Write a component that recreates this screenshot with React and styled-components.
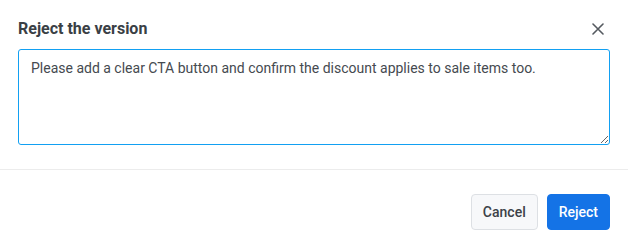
import React from "react";
import styled, { createGlobalStyle } from "styled-components";

const Global = createGlobalStyle`
  html, body { margin: 0; padding: 0; background: #fff; }
  body { font-family: Roboto, "Noto Sans", Arial, sans-serif; }
  * { box-sizing: border-box; }
`;

const Dialog = styled.div`
  width: 628px;
  height: 250px;
  background: #fff;
  display: flex;
  flex-direction: column;
`;

const Body = styled.div`
  padding: 18px 18px 24px 18px;
  display: flex;
  flex-direction: column;
  gap: 9px;
`;

const Header = styled.div`
  display: flex;
  align-items: center;
  justify-content: space-between;
  height: 22px;
`;

const Title = styled.h2`
  margin: 0;
  font-size: 16px;
  line-height: 22px;
  font-weight: 700;
  color: #3a3f45;
`;

const CloseButton = styled.button`
  border: 0;
  background: transparent;
  padding: 0;
  width: 20px;
  height: 20px;
  display: flex;
  align-items: center;
  justify-content: center;
  margin-right: 2px;
  cursor: pointer;
  color: #555a60;
`;

const TextArea = styled.textarea`
  width: 100%;
  height: 96px;
  margin: 0;
  border: 1px solid #12a0f2;
  border-radius: 3px;
  padding: 8px 12px;
  font-family: Roboto, "Noto Sans", Arial, sans-serif;
  font-size: 14px;
  line-height: 20px;
  color: #454a50;
  resize: vertical;
  outline: none;
  display: block;
`;

const Footer = styled.div`
  border-top: 1px solid #ececec;
  padding: 24px 18px 20px;
  display: flex;
  justify-content: flex-end;
  gap: 9px;
`;

const Button = styled.button`
  height: 36px;
  padding: 0 11px;
  border-radius: 4px;
  font-family: Roboto, "Noto Sans", Arial, sans-serif;
  font-size: 14px;
  font-weight: 500;
  cursor: pointer;
  border: 1px solid ${(p) => (p.$primary ? "#1473e6" : "#dde0e4")};
  background: ${(p) => (p.$primary ? "#1473e6" : "#f7f8fa")};
  color: ${(p) => (p.$primary ? "#ffffff" : "#3c4148")};
`;

export default function App() {
  return (
    <>
      <Global />
      <Dialog>
        <Body>
          <Header>
            <Title>Reject the version</Title>
            <CloseButton aria-label="Close">
              <svg width="12" height="12" viewBox="0 0 12 12">
                <path d="M1 1 L11 11 M11 1 L1 11" stroke="currentColor" strokeWidth="1.6" strokeLinecap="round" />
              </svg>
            </CloseButton>
          </Header>
          <TextArea defaultValue="Please add a clear CTA button and confirm the discount applies to sale items too." />
        </Body>
        <Footer>
          <Button>Cancel</Button>
          <Button $primary>Reject</Button>
        </Footer>
      </Dialog>
    </>
  );
}
